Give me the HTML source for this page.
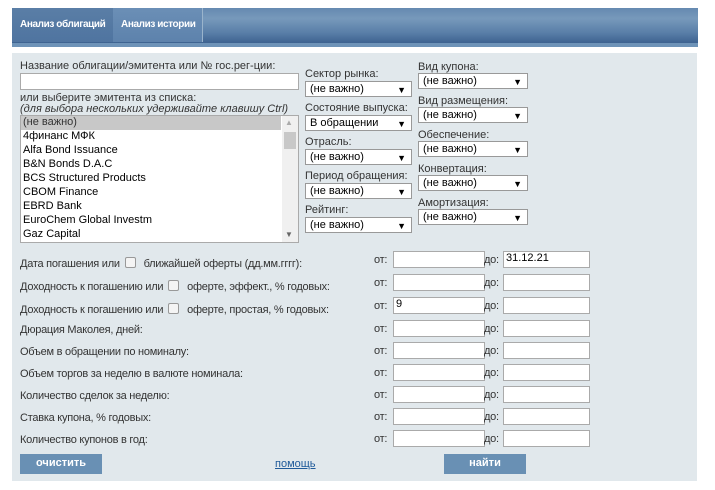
<!DOCTYPE html>
<html><head><meta charset="utf-8"><style>
*{margin:0;padding:0;box-sizing:border-box}
body{width:715px;height:490px;background:#fff;font-family:"Liberation Sans",Arial,sans-serif;position:relative;overflow:hidden;color:#333}
.a{position:absolute;white-space:nowrap}
#hdr{left:12px;top:8px;width:686px;height:39px;background:linear-gradient(#6589b0,#7799bb 30%,#5a7fa8 70%,#3d6290);border-bottom:4px solid #6e93b8}
.tab{top:8px;height:34px;font-size:10px;color:#fff;font-weight:bold;line-height:34px;padding-left:8px;letter-spacing:-0.4px}
#panel{left:12px;top:53px;width:685px;height:428px;background:#e1e8ec}
.l{font-size:11px;color:#333}
.inp{background:#fff;border:1px solid #aaa;height:17px}
.sel{background:#fff;border:1px solid #999;height:16px;font-size:11px;color:#000;padding-left:4px;line-height:14px}
.sel:after{content:"▼";position:absolute;right:5px;top:1px;font-size:9px}
.r{font-size:11px;color:#333;letter-spacing:-0.25px}
.cb{width:11px;height:11px;border:1px solid #999;border-radius:2px;background:#f4f4f4;display:inline-block;vertical-align:-1px;margin:0 5px}
.btn{background:#6990b4;color:#fff;font-weight:bold;font-size:11px;text-align:center;line-height:19px;height:20px}
.it{font-size:11px;color:#000;left:23px}
</style></head><body>
<div class="a" id="hdr"></div>
<div class="a tab" style="left:12px;width:101px;background:linear-gradient(#5a7ea6,#4f74a0)">Анализ облигаций</div>
<div class="a tab" style="left:113px;width:90px;background:linear-gradient(#6b8fb6,#5d82ac);border-right:1px solid #9ab4cc">Анализ истории</div>
<div class="a" id="panel"></div>

<div class="a l" style="left:20px;top:60px">Название облигации/эмитента или № гос.рег-ции:</div>
<div class="a inp" style="left:20px;top:73px;width:279px"></div>
<div class="a l" style="left:20px;top:92px">или выберите эмитента из списка:</div>
<div class="a l" style="left:20px;top:103px;font-style:italic">(для выбора нескольких удерживайте клавишу Ctrl)</div>
<div class="a" style="left:20px;top:115px;width:279px;height:128px;background:#fff;border:1px solid #aaa"></div>
<div class="a" style="left:21px;top:116px;width:260px;height:14px;background:#c8c8c8"></div>
<div class="a" style="left:282px;top:116px;width:16px;height:126px;background:#f0f0f0"></div>
<div class="a" style="left:284px;top:132px;width:12px;height:17px;background:#c8c8c8"></div>
<div class="a" style="left:285px;top:118px;font-size:8px;color:#aaa">▲</div>
<div class="a" style="left:285px;top:230px;font-size:8px;color:#666">▼</div>
<div class="a it" style="top:116px;color:#333">(не важно)</div>
<div class="a it" style="top:130px">4финанс МФК</div>
<div class="a it" style="top:144px">Alfa Bond Issuance</div>
<div class="a it" style="top:158px">B&amp;N Bonds D.A.C</div>
<div class="a it" style="top:172px">BCS Structured Products</div>
<div class="a it" style="top:186px">CBOM Finance</div>
<div class="a it" style="top:200px">EBRD Bank</div>
<div class="a it" style="top:214px">EuroChem Global Investm</div>
<div class="a it" style="top:228px">Gaz Capital</div>

<div class="a l" style="left:305px;top:68px">Сектор рынка:</div>
<div class="a sel" style="left:305px;top:81px;width:107px">(не важно)</div>
<div class="a l" style="left:305px;top:102px">Состояние выпуска:</div>
<div class="a sel" style="left:305px;top:115px;width:107px">В обращении</div>
<div class="a l" style="left:305px;top:136px">Отрасль:</div>
<div class="a sel" style="left:305px;top:149px;width:107px">(не важно)</div>
<div class="a l" style="left:305px;top:170px">Период обращения:</div>
<div class="a sel" style="left:305px;top:183px;width:107px">(не важно)</div>
<div class="a l" style="left:305px;top:204px">Рейтинг:</div>
<div class="a sel" style="left:305px;top:217px;width:107px">(не важно)</div>

<div class="a l" style="left:418px;top:61px">Вид купона:</div>
<div class="a sel" style="left:418px;top:73px;width:110px">(не важно)</div>
<div class="a l" style="left:418px;top:95px">Вид размещения:</div>
<div class="a sel" style="left:418px;top:107px;width:110px">(не важно)</div>
<div class="a l" style="left:418px;top:129px">Обеспечение:</div>
<div class="a sel" style="left:418px;top:141px;width:110px">(не важно)</div>
<div class="a l" style="left:418px;top:163px">Конвертация:</div>
<div class="a sel" style="left:418px;top:175px;width:110px">(не важно)</div>
<div class="a l" style="left:418px;top:197px">Амортизация:</div>
<div class="a sel" style="left:418px;top:209px;width:110px">(не важно)</div>

<div class="a r" style="left:20px;top:257px">Дата погашения или<span class="cb"></span> ближайшей оферты (дд.мм.гггг):</div>
<div class="a r" style="left:20px;top:280px">Доходность к погашению или<span class="cb"></span> оферте, эффект., % годовых:</div>
<div class="a r" style="left:20px;top:303px">Доходность к погашению или<span class="cb"></span> оферте, простая, % годовых:</div>
<div class="a r" style="left:20px;top:324px">Дюрация Маколея, дней:</div>
<div class="a r" style="left:20px;top:346px">Объем в обращении по номиналу:</div>
<div class="a r" style="left:20px;top:368px">Объем торгов за неделю в валюте номинала:</div>
<div class="a r" style="left:20px;top:390px">Количество сделок за неделю:</div>
<div class="a r" style="left:20px;top:412px">Ставка купона, % годовых:</div>
<div class="a r" style="left:20px;top:434px">Количество купонов в год:</div>

<div class="a r" style="left:374px;top:254px">от:</div><div class="a inp" style="left:393px;top:251px;width:92px"></div>
<div class="a r" style="left:484px;top:254px">до:</div><div class="a inp" style="left:503px;top:251px;width:87px;font-size:11px;padding-left:2px;color:#000">31.12.21</div>
<div class="a r" style="left:374px;top:277px">от:</div><div class="a inp" style="left:393px;top:274px;width:92px"></div>
<div class="a r" style="left:484px;top:277px">до:</div><div class="a inp" style="left:503px;top:274px;width:87px"></div>
<div class="a r" style="left:374px;top:300px">от:</div><div class="a inp" style="left:393px;top:297px;width:92px;font-size:11px;padding-left:2px;color:#000">9</div>
<div class="a r" style="left:484px;top:300px">до:</div><div class="a inp" style="left:503px;top:297px;width:87px"></div>
<div class="a r" style="left:374px;top:323px">от:</div><div class="a inp" style="left:393px;top:320px;width:92px"></div>
<div class="a r" style="left:484px;top:323px">до:</div><div class="a inp" style="left:503px;top:320px;width:87px"></div>
<div class="a r" style="left:374px;top:345px">от:</div><div class="a inp" style="left:393px;top:342px;width:92px"></div>
<div class="a r" style="left:484px;top:345px">до:</div><div class="a inp" style="left:503px;top:342px;width:87px"></div>
<div class="a r" style="left:374px;top:367px">от:</div><div class="a inp" style="left:393px;top:364px;width:92px"></div>
<div class="a r" style="left:484px;top:367px">до:</div><div class="a inp" style="left:503px;top:364px;width:87px"></div>
<div class="a r" style="left:374px;top:389px">от:</div><div class="a inp" style="left:393px;top:386px;width:92px"></div>
<div class="a r" style="left:484px;top:389px">до:</div><div class="a inp" style="left:503px;top:386px;width:87px"></div>
<div class="a r" style="left:374px;top:411px">от:</div><div class="a inp" style="left:393px;top:408px;width:92px"></div>
<div class="a r" style="left:484px;top:411px">до:</div><div class="a inp" style="left:503px;top:408px;width:87px"></div>
<div class="a r" style="left:374px;top:433px">от:</div><div class="a inp" style="left:393px;top:430px;width:92px"></div>
<div class="a r" style="left:484px;top:433px">до:</div><div class="a inp" style="left:503px;top:430px;width:87px"></div>

<div class="a btn" style="left:20px;top:454px;width:82px">очистить</div>
<div class="a" style="left:275px;top:458px;font-size:11px;color:#1f5a9a;text-decoration:underline">помощь</div>
<div class="a btn" style="left:444px;top:454px;width:82px">найти</div>
</body></html>
